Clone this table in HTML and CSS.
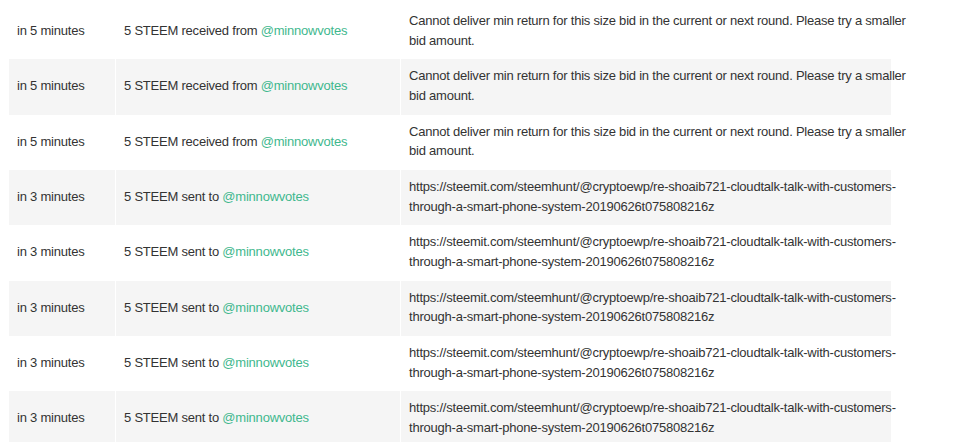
FILE: index.html
```html
<!DOCTYPE html>
<html lang="en">
<head>
    <meta charset="UTF-8">
    <title>Bid History</title>
    <link rel="stylesheet" href="styles.css">
</head>
<body>
    <table class="history">
        <colgroup>
            <col class="col-time">
            <col class="col-tx">
            <col class="col-memo">
        </colgroup>
        <tbody>
            <tr>
                <td>in 5 minutes</td>
                <td>5 STEEM received from <a href="#">@minnowvotes</a></td>
                <td><div class="memo">Cannot deliver min return for this size bid in the current or next round. Please try a smaller bid amount.</div></td>
            </tr>
            <tr>
                <td>in 5 minutes</td>
                <td>5 STEEM received from <a href="#">@minnowvotes</a></td>
                <td><div class="memo">Cannot deliver min return for this size bid in the current or next round. Please try a smaller bid amount.</div></td>
            </tr>
            <tr>
                <td>in 5 minutes</td>
                <td>5 STEEM received from <a href="#">@minnowvotes</a></td>
                <td><div class="memo">Cannot deliver min return for this size bid in the current or next round. Please try a smaller bid amount.</div></td>
            </tr>
            <tr>
                <td>in 3 minutes</td>
                <td>5 STEEM sent to <a href="#">@minnowvotes</a></td>
                <td><div class="memo">https://steemit.com/steemhunt/@cryptoewp/re-shoaib721-cloudtalk-talk-with-customers-through-a-smart-phone-system-20190626t075808216z</div></td>
            </tr>
            <tr>
                <td>in 3 minutes</td>
                <td>5 STEEM sent to <a href="#">@minnowvotes</a></td>
                <td><div class="memo">https://steemit.com/steemhunt/@cryptoewp/re-shoaib721-cloudtalk-talk-with-customers-through-a-smart-phone-system-20190626t075808216z</div></td>
            </tr>
            <tr>
                <td>in 3 minutes</td>
                <td>5 STEEM sent to <a href="#">@minnowvotes</a></td>
                <td><div class="memo">https://steemit.com/steemhunt/@cryptoewp/re-shoaib721-cloudtalk-talk-with-customers-through-a-smart-phone-system-20190626t075808216z</div></td>
            </tr>
            <tr>
                <td>in 3 minutes</td>
                <td>5 STEEM sent to <a href="#">@minnowvotes</a></td>
                <td><div class="memo">https://steemit.com/steemhunt/@cryptoewp/re-shoaib721-cloudtalk-talk-with-customers-through-a-smart-phone-system-20190626t075808216z</div></td>
            </tr>
            <tr>
                <td>in 3 minutes</td>
                <td>5 STEEM sent to <a href="#">@minnowvotes</a></td>
                <td><div class="memo">https://steemit.com/steemhunt/@cryptoewp/re-shoaib721-cloudtalk-talk-with-customers-through-a-smart-phone-system-20190626t075808216z</div></td>
            </tr>
        </tbody>
    </table>
</body>
</html>
```

FILE: styles.css
```css
body {
    margin: 4px 8px 0;
    background: #fff;
    font-family: "Liberation Sans", Arial, sans-serif;
    font-size: 13px;
    letter-spacing: -0.22px;
    color: #333;
}

.history {
    width: 884px;
    table-layout: fixed;
    border-collapse: separate;
    border-spacing: 1px 0;
}

.col-time {
    width: 106px;
}

.col-tx {
    width: 284px;
}

.col-memo {
    width: 490px;
}

.history td {
    padding: 7px 8px 9px;
    line-height: 19.67px;
    vertical-align: middle;
}

.history tr:nth-child(even) td {
    background-color: #f5f5f5;
}

.history a {
    color: #3fb88e;
    text-decoration: none;
}

/* memo text runs a little past the cell background */
.memo {
    width: 512px;
    overflow-wrap: break-word;
}
```
